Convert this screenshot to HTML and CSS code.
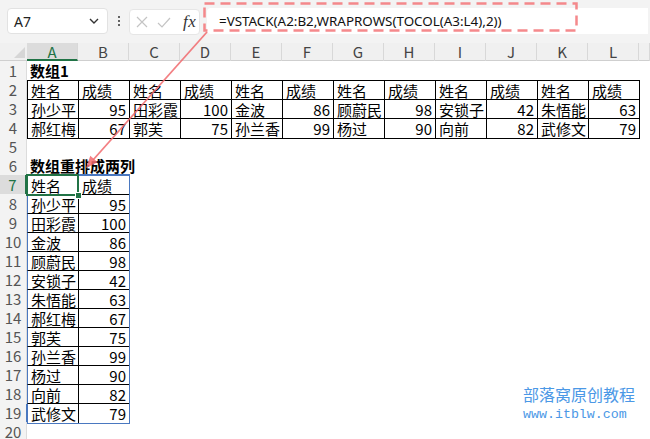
FILE: index.html
```html
<!DOCTYPE html>
<html>
<head>
<meta charset="utf-8">
<link rel="stylesheet" href="styles.css">
</head>
<body>
<div class="toolbar">
  <div class="namebox"><span>A7</span>
    <svg width="10" height="6" viewBox="0 0 10 6"><path d="M1 1 L5 5 L9 1" fill="none" stroke="#333" stroke-width="1.4"/></svg>
  </div>
  <div class="dots"><i></i><i></i><i></i></div>
  <div class="fxbox">
    <svg width="12" height="12" viewBox="0 0 12 12"><path d="M1 1 L11 11 M11 1 L1 11" stroke="#c4c4c4" stroke-width="1.2"/></svg>
    <svg width="14" height="11" viewBox="0 0 14 11"><path d="M1 6 L5 10 L13 1" fill="none" stroke="#c4c4c4" stroke-width="1.2"/></svg>
    <span class="fx">fx</span>
  </div>
  <div class="formula">=VSTACK(A2:B2,WRAPROWS(TOCOL(A3:L4),2))</div>
</div>

<div class="sheet">
  <div class="row colhead">
    <div class="corner"></div>
    <div class="ch sel">A</div><div class="ch">B</div><div class="ch">C</div><div class="ch">D</div><div class="ch">E</div><div class="ch">F</div><div class="ch">G</div><div class="ch">H</div><div class="ch">I</div><div class="ch">J</div><div class="ch">K</div><div class="ch">L</div><div class="ch"></div>
  </div>
  <div class="row"><div class="rh">1</div><div class="c bold">数组1</div></div>
  <div class="row">
    <div class="rh">2</div>
    <div class="c t">姓名</div><div class="c t">成绩</div><div class="c t">姓名</div><div class="c t">成绩</div><div class="c t">姓名</div><div class="c t">成绩</div><div class="c t">姓名</div><div class="c t">成绩</div><div class="c t">姓名</div><div class="c t">成绩</div><div class="c t">姓名</div><div class="c t r">成绩</div>
  </div>
  <div class="row">
    <div class="rh">3</div>
    <div class="c t">孙少平</div><div class="c t n">95</div><div class="c t">田彩霞</div><div class="c t n">100</div><div class="c t">金波</div><div class="c t n">86</div><div class="c t">顾蔚民</div><div class="c t n">98</div><div class="c t">安锁子</div><div class="c t n">42</div><div class="c t">朱悟能</div><div class="c t n r">63</div>
  </div>
  <div class="row">
    <div class="rh">4</div>
    <div class="c t b">郝红梅</div><div class="c t n b">67</div><div class="c t b">郭芙</div><div class="c t n b">75</div><div class="c t b">孙兰香</div><div class="c t n b">99</div><div class="c t b">杨过</div><div class="c t n b">90</div><div class="c t b">向前</div><div class="c t n b">82</div><div class="c t b">武修文</div><div class="c t n rb">79</div>
  </div>
  <div class="row"><div class="rh">5</div></div>
  <div class="row"><div class="rh">6</div><div class="c bold">数组重排成两列</div></div>
  <div class="row"><div class="rh selr">7</div><div class="c t sa active">姓名</div><div class="c t sb stop">成绩</div></div>
  <div class="row"><div class="rh">8</div><div class="c t sa">孙少平</div><div class="c t sb n">95</div></div>
  <div class="row"><div class="rh">9</div><div class="c t sa">田彩霞</div><div class="c t sb n">100</div></div>
  <div class="row"><div class="rh">10</div><div class="c t sa">金波</div><div class="c t sb n">86</div></div>
  <div class="row"><div class="rh">11</div><div class="c t sa">顾蔚民</div><div class="c t sb n">98</div></div>
  <div class="row"><div class="rh">12</div><div class="c t sa">安锁子</div><div class="c t sb n">42</div></div>
  <div class="row"><div class="rh">13</div><div class="c t sa">朱悟能</div><div class="c t sb n">63</div></div>
  <div class="row"><div class="rh">14</div><div class="c t sa">郝红梅</div><div class="c t sb n">67</div></div>
  <div class="row"><div class="rh">15</div><div class="c t sa">郭芙</div><div class="c t sb n">75</div></div>
  <div class="row"><div class="rh">16</div><div class="c t sa">孙兰香</div><div class="c t sb n">99</div></div>
  <div class="row"><div class="rh">17</div><div class="c t sa">杨过</div><div class="c t sb n">90</div></div>
  <div class="row"><div class="rh">18</div><div class="c t sa">向前</div><div class="c t sb n">82</div></div>
  <div class="row"><div class="rh">19</div><div class="c t sa slast">武修文</div><div class="c t sb n slastb">79</div></div>
  <div class="row"><div class="rh">20</div></div>
</div>

<svg class="annot" width="650" height="439" viewBox="0 0 650 439">
  <rect x="204.5" y="3.5" width="372" height="27" fill="none" stroke="#f47c80" stroke-width="2.5" stroke-dasharray="10 6" opacity="0.9"/>
  <line x1="207" y1="32" x2="93" y2="160" stroke="#f26a6e" stroke-width="1.8" opacity="0.85"/>
  <polygon points="86,168 97.7,162.3 90.3,155.7" fill="#f26a6e" opacity="0.85"/>
</svg>

<div class="watermark">
  <div class="wm-cn">部落窝原创教程</div>
  <div class="wm-url">www.itblw.com</div>
</div>
</body>
</html>
```
FILE: styles.css
```css
* { box-sizing: border-box; margin: 0; padding: 0; }
html, body { width: 650px; height: 439px; overflow: hidden; background: #fff; }
body { position: relative; font-family: "Noto Sans CJK SC", "Noto Sans", sans-serif; color: #000; }

.toolbar {
  height: 43px;
  background: #f3f3f3;
  display: flex;
  align-items: flex-start;
  padding: 8px 0 0 7px;
}
.namebox {
  width: 101px; height: 26px;
  background: #fff;
  border: 1px solid #e2e2e2;
  border-radius: 4px;
  display: flex; align-items: center; justify-content: space-between;
  padding: 0 8px 0 6px;
  font: 14px "Noto Sans", sans-serif;
  color: #222;
}
.dots {
  width: 4px; height: 26px;
  margin-left: 9px;
  display: flex; flex-direction: column; justify-content: center; align-items: center; gap: 2px;
}
.dots i { display: block; width: 2px; height: 2px; background: #333; border-radius: 1px; }
.fxbox {
  width: 71px; height: 26px;
  margin-left: 8px;
  margin-top: 1px;
  background: #fff;
  border: 1px solid #e6e6e6;
  border-radius: 4px;
  display: flex; align-items: center;
  padding-left: 6px;
  gap: 9px;
}
.fx {
  font: italic 17px "Liberation Serif", serif;
  color: #333;
  margin-left: 3px;
  letter-spacing: 0.5px;
}
.formula {
  width: 441px; height: 26px;
  margin-left: 7px;
  background: #fff;
  border-radius: 4px 0 0 4px;
  padding-left: 12px;
  font: 13.4px "Noto Sans", sans-serif;
  line-height: 26px;
  color: #111;
  white-space: nowrap;
}

.row {
  display: grid;
  grid-template-columns: 27px repeat(12, 51px) 1fr;
  height: 19px;
}
.colhead { height: 18px; background: #f0f0f0; border-bottom: 1px solid #cfcfcf; }
.corner { position: relative; }
.corner::after {
  content: ""; position: absolute; right: 2px; bottom: 3px;
  width: 0; height: 0;
  border-left: 11px solid transparent;
  border-bottom: 11px solid #d6d6d6;
}
.ch {
  border-right: 1px solid #d8d8d8;
  text-align: center;
  font-size: 15px; line-height: 17px;
  color: #444;
}
.ch.sel { background: #dcdcdc; color: #217346; border-bottom: 2px solid #217346; height: 18px; }

.rh {
  background: #f3f3f3;
  text-align: center;
  font-size: 15px; line-height: 19px;
  color: #555;
  border-right: 1px solid #dcdcdc;
}
.rh.selr { background: #dcdcdc; color: #217346; border-right: 2px solid #217346; }

.c {
  font-size: 15px;
  line-height: 18px;
  padding: 1px 3px 0 3px;
  white-space: nowrap;
  overflow: visible;
}
.bold { font-weight: 700; }
.n { text-align: right; }
.t { border-left: 1px solid #000; border-top: 1px solid #000; }
.r { box-shadow: 1px 0 0 #000; }
.b { box-shadow: 0 1px 0 #000; }
.rb { box-shadow: 1px 0 0 #000, 0 1px 0 #000, 1px 1px 0 #000; }

.sa { border-left-color: #4a78c0; }
.sb { box-shadow: 1px 0 0 #4a78c0; }
.stop { border-top-color: #4a78c0; box-shadow: 1px 0 0 #4a78c0, 1px -1px 0 #4a78c0; }
.slast { box-shadow: 0 1px 0 #4a78c0, -1px 1px 0 #4a78c0; }
.slastb { box-shadow: 1px 0 0 #4a78c0, 0 1px 0 #4a78c0, 1px 1px 0 #4a78c0; }

.active {
  position: relative;
  outline: 2px solid #217346;
  outline-offset: -1px;
}
.active::after {
  content: ""; position: absolute;
  right: -3px; bottom: -3px;
  width: 5px; height: 5px;
  background: #217346;
  box-shadow: 0 0 0 1px #fff;
}

.annot { position: absolute; left: 0; top: 0; pointer-events: none; }

.watermark {
  position: absolute; left: 523px; top: 384px;
  color: #4b98e6;
}
.wm-cn { font-size: 16px; line-height: 20px; }
.wm-url { font: 13.3px "Liberation Mono", monospace; line-height: 14px; margin-top: 4px; }
```
